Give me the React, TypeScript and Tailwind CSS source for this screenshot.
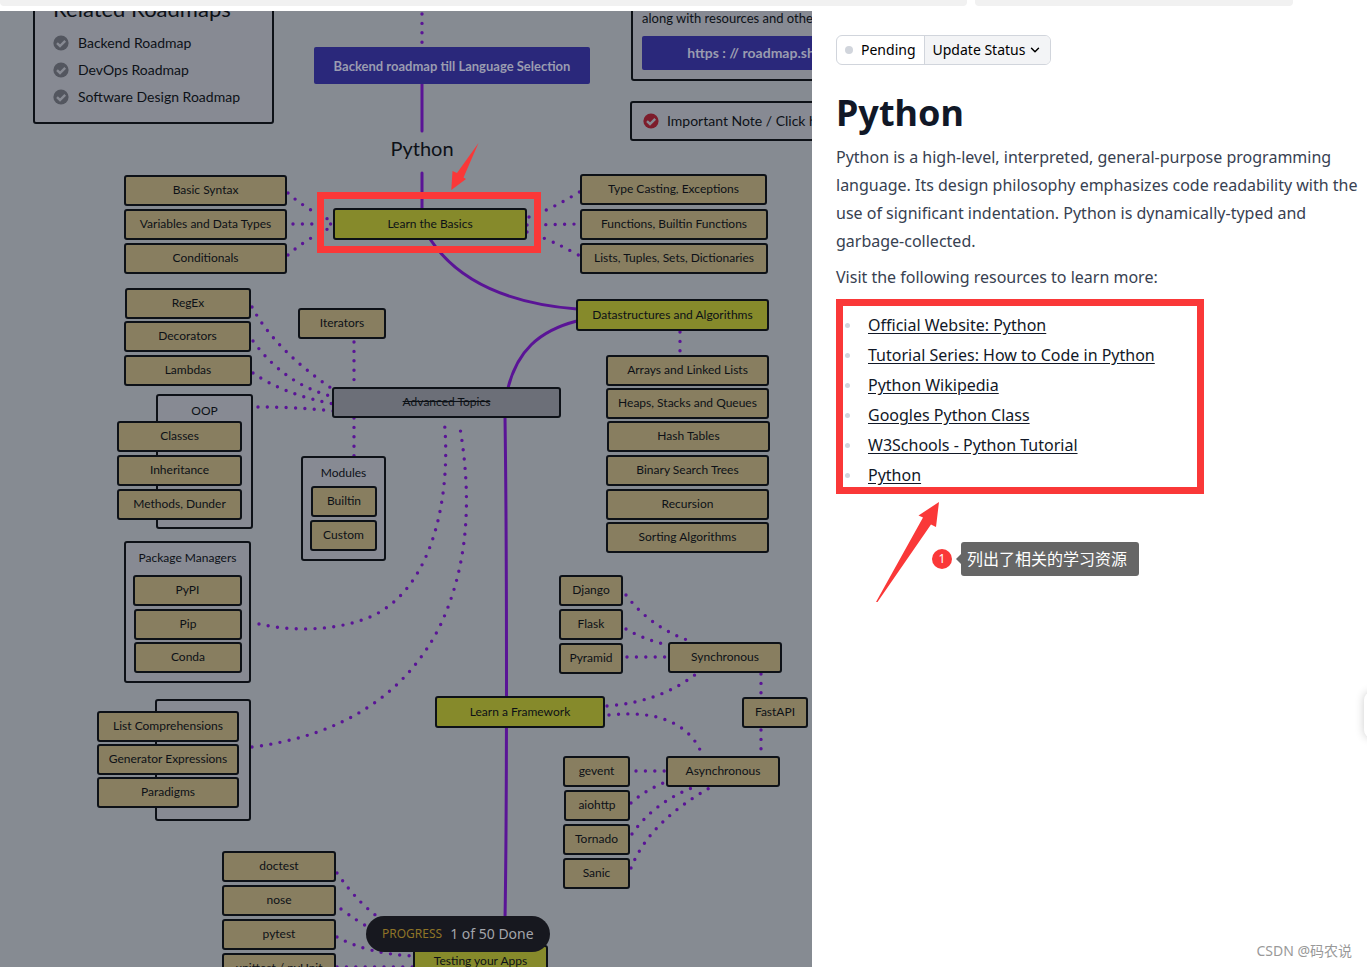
import clsx from 'clsx'
import { ChevronDown } from 'lucide-react'
import { ReactNode, useState } from 'react'

type NodeKind = 'topic' | 'subtopic' | 'done'

interface RoadmapNode {
  label: string
  x: number
  y: number
  width: number
  kind?: NodeKind
}

interface RoadmapGroup {
  label?: string
  x: number
  y: number
  width: number
  height: number
}

const kindStyle: Record<NodeKind, string> = {
  topic: 'h-8 bg-[#868a2b]',
  subtopic: 'h-[31px] bg-[#887e60]',
  done: 'h-[31px] bg-[#6c6f78] line-through',
}

const groups: RoadmapGroup[] = [
  { label: 'OOP', x: 156, y: 394, width: 97, height: 135 },
  { label: 'Modules', x: 301, y: 456, width: 85, height: 105 },
  { label: 'Package Managers', x: 124, y: 541, width: 127, height: 142 },
  { x: 155, y: 699, width: 96, height: 122 },
]

const nodes: RoadmapNode[] = [
  { label: 'Learn the Basics', x: 333, y: 208, width: 194, kind: 'topic' },
  { label: 'Basic Syntax', x: 124, y: 175, width: 163 },
  { label: 'Variables and Data Types', x: 124, y: 209, width: 163 },
  { label: 'Conditionals', x: 124, y: 243, width: 163 },
  { label: 'Type Casting, Exceptions', x: 580, y: 174, width: 187 },
  { label: 'Functions, Builtin Functions', x: 580, y: 209, width: 188 },
  { label: 'Lists, Tuples, Sets, Dictionaries', x: 580, y: 243, width: 188 },

  { label: 'Datastructures and Algorithms', x: 576, y: 299, width: 193, kind: 'topic' },
  { label: 'Arrays and Linked Lists', x: 606, y: 355, width: 163 },
  { label: 'Heaps, Stacks and Queues', x: 606, y: 388, width: 163 },
  { label: 'Hash Tables', x: 607, y: 421, width: 163 },
  { label: 'Binary Search Trees', x: 606, y: 455, width: 163 },
  { label: 'Recursion', x: 606, y: 489, width: 163 },
  { label: 'Sorting Algorithms', x: 606, y: 522, width: 163 },

  { label: 'Advanced Topics', x: 332, y: 387, width: 229, kind: 'done' },
  { label: 'RegEx', x: 125, y: 288, width: 126 },
  { label: 'Decorators', x: 124, y: 321, width: 127 },
  { label: 'Lambdas', x: 124, y: 355, width: 128 },
  { label: 'Iterators', x: 298, y: 308, width: 88 },
  { label: 'Classes', x: 117, y: 421, width: 125 },
  { label: 'Inheritance', x: 117, y: 455, width: 125 },
  { label: 'Methods, Dunder', x: 117, y: 489, width: 125 },
  { label: 'Builtin', x: 311, y: 486, width: 66 },
  { label: 'Custom', x: 310, y: 520, width: 67 },
  { label: 'PyPI', x: 133, y: 575, width: 109 },
  { label: 'Pip', x: 134, y: 609, width: 108 },
  { label: 'Conda', x: 134, y: 642, width: 108 },
  { label: 'List Comprehensions', x: 97, y: 711, width: 142 },
  { label: 'Generator Expressions', x: 97, y: 744, width: 142 },
  { label: 'Paradigms', x: 97, y: 777, width: 142 },

  { label: 'Learn a Framework', x: 435, y: 696, width: 170, kind: 'topic' },
  { label: 'Django', x: 559, y: 575, width: 64 },
  { label: 'Flask', x: 559, y: 609, width: 64 },
  { label: 'Pyramid', x: 559, y: 643, width: 64 },
  { label: 'Synchronous', x: 668, y: 642, width: 114 },
  { label: 'FastAPI', x: 742, y: 697, width: 66 },
  { label: 'Asynchronous', x: 666, y: 756, width: 114 },
  { label: 'gevent', x: 563, y: 756, width: 67 },
  { label: 'aiohttp', x: 564, y: 790, width: 66 },
  { label: 'Tornado', x: 563, y: 824, width: 67 },
  { label: 'Sanic', x: 563, y: 858, width: 67 },

  { label: 'doctest', x: 222, y: 851, width: 114 },
  { label: 'nose', x: 222, y: 885, width: 114 },
  { label: 'pytest', x: 222, y: 919, width: 114 },
  { label: 'unittest / pyUnit', x: 222, y: 953, width: 114 },
  { label: 'Testing your Apps', x: 413, y: 945, width: 135, kind: 'topic' },
]

const solidEdges = [
  'M422 84V131',
  'M422 173V209',
  'M430 239C455 277 502 303 577 309',
  'M577 321C538 331 517 352 508 388',
  'M505 417C507 560 507 800 505 920',
]

const dottedEdges = [
  'M422 14V48',
  'M288 193Q304 208 332 221',
  'M293 224H334',
  'M288 255Q304 240 334 226',
  'M529 217Q552 209 581 191',
  'M527 225L580 224',
  'M527 232Q552 240 580 256',
  'M680 332V356',
  'M252 307Q275 350 334 390',
  'M253 341Q285 385 334 397',
  'M253 373Q285 395 334 404',
  'M258 407Q295 407 334 411',
  'M354 342V388',
  'M354 418V458',
  'M259 624C290 631 333 632 370 617C433 590 452 495 444 418',
  'M252 747C340 736 405 696 440 626C471 560 471 490 459 422',
  'M626 595Q650 627 690 641',
  'M626 629Q645 640 668 645',
  'M627 657H668',
  'M607 706Q660 702 696 674',
  'M609 715C655 710 688 722 701 752',
  'M761 674V698',
  'M761 730V757',
  'M636 771H667',
  'M631 803Q645 790 668 781',
  'M632 834Q655 801 697 786',
  'M631 868Q650 820 715 785',
  'M337 873Q360 906 384 921',
  'M341 909Q357 921 370 928',
  'M337 937Q368 954 414 956',
  'M337 967H414',
]

const resources = [
  'Official Website: Python',
  'Tutorial Series: How to Code in Python',
  'Python Wikipedia',
  'Googles Python Class',
  'W3Schools - Python Tutorial',
  'Python',
]

const CheckBadge = ({ className }: { className: string }) => (
  <svg viewBox="0 0 16 16" className={clsx('size-4 shrink-0', className)} aria-hidden="true">
    <circle cx="8" cy="8" r="7.6" fill="currentColor" />
    <path d="M4 8.2L7 11L12.2 5.8" fill="none" stroke="#878a93" strokeWidth="2.4" />
  </svg>
)

const RoadmapLink = ({ children }: { children: ReactNode }) => (
  <li>
    <a href="#" className="flex items-center gap-[9px]">
      <CheckBadge className="text-[#53565f]" />
      {children}
    </a>
  </li>
)

const Edges = () => (
  <svg className="absolute left-0 top-0 h-[980px] w-[812px]" viewBox="0 0 812 980" fill="none" stroke="#5a1496" strokeWidth="3" strokeLinecap="round" aria-hidden="true">
    {solidEdges.map((d) => (
      <path key={d} d={d} />
    ))}
    {dottedEdges.map((d) => (
      <path key={d} d={d} strokeWidth="3.4" strokeDasharray="0 9.4" />
    ))}
  </svg>
)

const RoadmapChart = () => (
  <div className="absolute left-0 top-[-11px] h-[980px] w-[860px] text-xs leading-4 text-[#0d1117]">
    <Edges />

    <section className="absolute left-[33px] -top-2 h-[132px] w-[241px] rounded-[3px] border-2 border-[#0d1117] bg-[#878a93] pl-[18px] pt-[3px] text-sm leading-4">
      <h2 className="text-[22px] leading-6">Related Roadmaps</h2>
      <ul className="flex flex-col gap-[11px] pt-3.5">
        <RoadmapLink>Backend Roadmap</RoadmapLink>
        <RoadmapLink>DevOps Roadmap</RoadmapLink>
        <RoadmapLink>Software Design Roadmap</RoadmapLink>
      </ul>
    </section>

    <section className="absolute left-[631px] top-0 h-[81px] w-[240px] rounded-[3px] border-2 border-[#0d1117] bg-[#878a93] px-[9px] pt-2">
      <p className="whitespace-nowrap text-[13px] leading-4">along with resources and other</p>
      <a href="#" className="mt-2.5 flex h-[34px] items-center justify-center whitespace-pre rounded-[2px] bg-[#2a287b] text-sm font-bold text-[#9a9cb0]">
        https : // roadmap.sh
      </a>
    </section>

    <a
      href="#"
      className="absolute left-[630px] top-[101px] flex h-10 w-[240px] items-center gap-2 whitespace-nowrap rounded-[3px] border-2 border-[#0d1117] bg-[#878a93] pl-[11px] text-sm leading-4"
    >
      <CheckBadge className="text-[#7d1c2b]" />
      Important Note / Click here
    </a>

    <a href="#" className="absolute left-[314px] top-[47px] flex h-[37px] w-[276px] items-center justify-center rounded-[2px] bg-[#2a287b] text-[13px] font-bold text-[#9a9cb0]">
      Backend roadmap till Language Selection
    </a>

    <h1 className="absolute left-[372px] top-[136px] w-[100px] text-center text-xl leading-6">Python</h1>

    {groups.map(({ label, x, y, width, height }) => (
      <div key={y} className="absolute whitespace-nowrap rounded-[3px] border-2 border-[#0d1117] bg-[#878a93] pt-[7px] text-center" style={{ left: x, top: y, width, height }}>
        {label}
      </div>
    ))}

    {nodes.map(({ label, x, y, width, kind = 'subtopic' }) => (
      <button
        key={label}
        type="button"
        className={clsx('absolute flex items-center justify-center whitespace-nowrap rounded-[3px] border-2 border-[#0d1117] pb-px', kindStyle[kind])}
        style={{ left: x, top: y, width }}
      >
        {label}
      </button>
    ))}

    <div className="absolute left-[317px] top-[192px] h-[61px] w-[224px] border-7 border-[#fa3838]" />
    <svg className="absolute left-[450px] top-[142px] h-12 w-[30px]" viewBox="0 0 30 48" aria-hidden="true">
      <path d="M28.5 1L7 31L2.5 29L1.3 48L16 37L13.5 35.5Z" fill="#fa3838" />
    </svg>
  </div>
)

const TopicPanel = () => {
  const [status] = useState('Pending')

  return (
    <aside className="relative w-[555px] shrink-0 bg-white pl-6 pt-6 text-[#374151]">
      <div className="inline-flex h-[30px] overflow-hidden rounded-md border border-gray-300 text-sm text-black">
        <span className="flex items-center gap-2 px-2">
          <span className="size-2 rounded-full bg-gray-300" />
          {status}
        </span>
        <button type="button" className="flex items-center gap-[3px] border-l border-gray-300 bg-gray-100 px-2">
          Update Status
          <ChevronDown className="size-3.5" strokeWidth={2.5} />
        </button>
      </div>

      <h1 className="mt-6 text-4xl font-bold leading-12 text-[#111827]">Python</h1>
      <p className="-mr-2 mt-1.5 text-base leading-7">
        Python is a high-level, interpreted, general-purpose programming language. Its design philosophy emphasizes code readability with the use of significant indentation. Python is dynamically-typed and
        garbage-collected.
      </p>
      <p className="mt-2 text-base leading-7">Visit the following resources to learn more:</p>

      <ul className="mt-2 flex w-[368px] flex-col gap-1.5 border-7 border-[#fa3838] pt-[7px] pl-0.5 text-base leading-6">
        {resources.map((resource) => (
          <li key={resource} className="flex items-center gap-[18px]">
            <span className="size-[5px] rounded-full bg-gray-300" />
            <a href="#" className="text-[#111827] underline underline-offset-2">
              {resource}
            </a>
          </li>
        ))}
      </ul>

      <svg className="absolute left-[63px] top-[490px] h-[102px] w-16" viewBox="0 0 64 102" aria-hidden="true">
        <path d="M64 1L43.5 14.5L48 16.5L1 101L2.5 101L56 23.5L61 26Z" fill="#fa3838" />
      </svg>
      <div className="absolute left-[120px] top-[531px] flex items-center">
        <span className="flex size-5 items-center justify-center rounded-full bg-[#fa3838] text-xs text-white">1</span>
        <span className="ml-1 border-y-[5px] border-r-[5px] border-y-transparent border-r-[#666]" />
        <span className="rounded-[3px] bg-[#666] py-[5px] pl-1.5 pr-3 text-base text-white">列出了相关的学习资源</span>
      </div>

      <div className="absolute -right-5 top-[681px] h-[46px] w-[23px] rounded-lg bg-white shadow-[0_0_10px_rgba(0,0,0,0.2)]" />
      <span className="absolute bottom-1.5 right-[15px] text-sm text-[#999]">CSDN @码农说</span>
    </aside>
  )
}

const App = () => (
  <div className="flex h-screen flex-col overflow-hidden bg-white font-['Noto_Sans','Noto_Sans_CJK_SC',sans-serif]">
    <div className="flex h-[11px] shrink-0 gap-2 pr-[74px]">
      <div className="h-1.5 flex-1 rounded-b-sm bg-[#f1f1f1]" />
      <div className="h-1.5 w-[318px] rounded-b-sm bg-[#f1f1f1]" />
    </div>
    <div className="flex min-h-0 flex-1">
      <main className="relative min-w-0 flex-1 overflow-hidden bg-[#868b92] font-[Lato,sans-serif]">
        <RoadmapChart />
        <div className="absolute bottom-[15px] left-[366px] flex h-9 items-center gap-2 rounded-full bg-[#17181f] px-4 font-['Noto_Sans',sans-serif] text-[#a3a5ab]">
          <span className="text-xs text-[#8f7427]">PROGRESS</span>
          <span className="text-sm">1 of 50 Done</span>
        </div>
      </main>
      <TopicPanel />
    </div>
  </div>
)

export default App
